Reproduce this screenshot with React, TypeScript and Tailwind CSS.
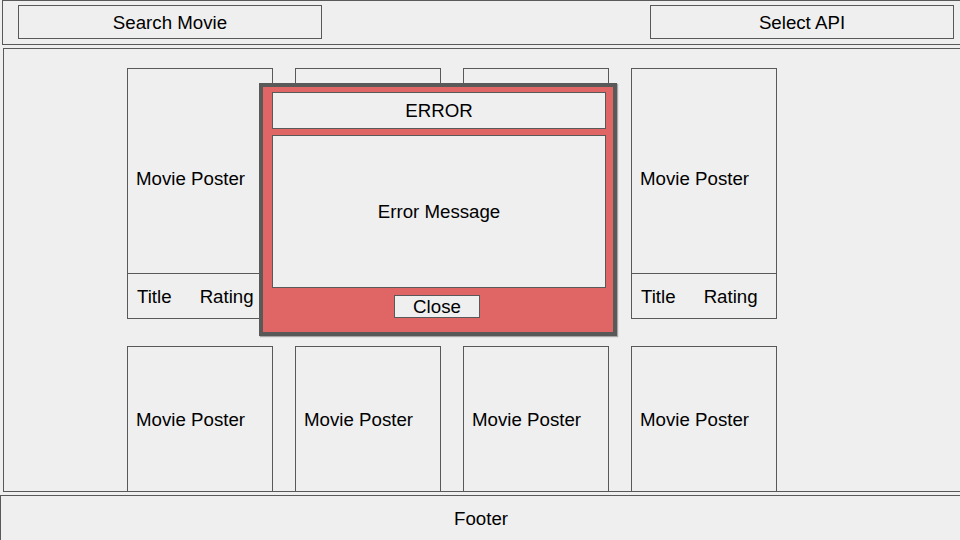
import React from "react";

const Card = ({ row }: { row: number }) => (
  <div className="w-[146px] h-[251px] border border-[#595959] flex flex-col shrink-0">
    <div
      className={
        "h-[205px] shrink-0 border-b border-[#595959] pl-[8px] leading-[21px] " +
        (row === 1 ? "pt-[99px]" : "pt-[62px]")
      }
    >
      Movie Poster
    </div>
    {row === 1 ? (
      <div className="flex-1 flex items-center pl-[9px] gap-[28px] leading-[21px]">
        <span>Title</span>
        <span>Rating</span>
      </div>
    ) : null}
  </div>
);

export default function App() {
  return (
    <div
      className="relative w-[960px] h-[540px] overflow-hidden bg-[#efefef] text-black text-[18.7px]"
      style={{ fontFamily: '"Liberation Sans", Arial, sans-serif' }}
    >
      {/* Header */}
      <div className="ml-[2px] w-[970px] h-[45px] border border-[#595959] relative">
        <div className="absolute left-[15px] top-[4px] w-[304px] h-[34px] border border-[#595959] flex items-center justify-center leading-none pt-[2px]">
          Search Movie
        </div>
        <div className="absolute left-[647px] top-[4px] w-[304px] h-[34px] border border-[#595959] flex items-center justify-center leading-none pt-[2px]">
          Select API
        </div>
      </div>

      {/* Main */}
      <div className="mt-[3px] ml-[3px] w-[970px] h-[444px] border border-[#595959] overflow-hidden pl-[123px] pt-[19px]">
        <div className="grid grid-cols-[146px_146px_146px_146px] gap-x-[22px] gap-y-[27px]">
          <Card row={1} />
          <Card row={1} />
          <Card row={1} />
          <Card row={1} />
          <Card row={2} />
          <Card row={2} />
          <Card row={2} />
          <Card row={2} />
        </div>
      </div>

      {/* Footer */}
      <div className="mt-[3px] w-[970px] h-[60px] border border-[#595959] relative">
        <div className="absolute left-0 top-0 w-[960px] h-[45px] flex items-center justify-center leading-none pt-[2px]">
          Footer
        </div>
      </div>

      {/* Modal */}
      <div className="absolute left-[259px] top-[83px] w-[358px] h-[253px] border-4 border-[#595959] bg-[#e06666] shadow-[1px_1px_1px_rgba(0,0,0,0.3)] pl-[9px] pt-[5px]">
        <div className="w-[334px] h-[37px] border border-[#595959] bg-[#efefef] flex items-center justify-center leading-none pt-[2px]">
          ERROR
        </div>
        <div className="mt-[6px] w-[334px] h-[153px] border border-[#595959] bg-[#efefef] flex items-center justify-center leading-none pt-[2px]">
          Error Message
        </div>
        <div className="mt-[7px] flex justify-center w-[334px]">
          <div className="w-[86px] h-[23px] border border-[#595959] bg-[#efefef] flex items-center justify-center leading-none -ml-[4px] pt-[1px]">
            Close
          </div>
        </div>
      </div>
    </div>
  );
}
